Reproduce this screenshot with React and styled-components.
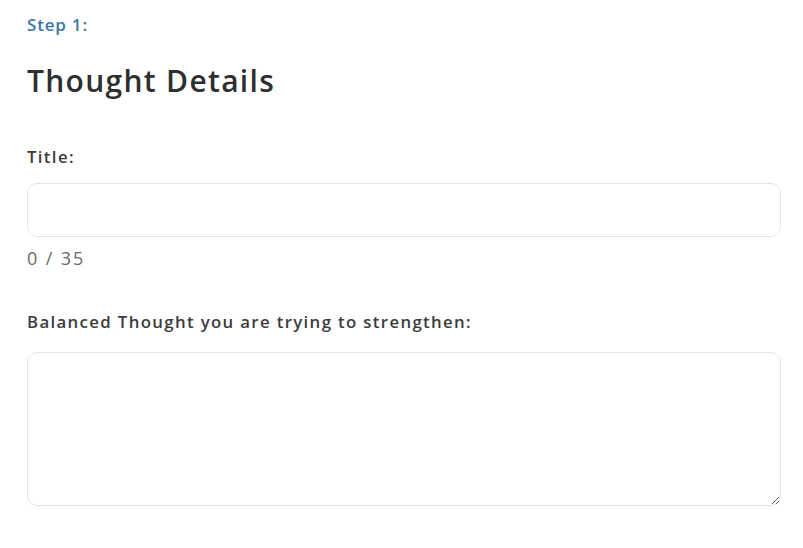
import React from "react";
import styled, { createGlobalStyle } from "styled-components";

const Global = createGlobalStyle`
  html, body { margin: 0; padding: 0; background: #ffffff; }
  body { font-family: "Open Sans", "Noto Sans", sans-serif; color: #333333; }
  * { box-sizing: border-box; }
`;

const Page = styled.div`
  padding: 14px 22px 0 27px;
  display: flex;
  flex-direction: column;
`;

const Step = styled.div`
  font-size: 17px;
  font-weight: 600;
  color: #3b77a6;
  line-height: 22px;
  letter-spacing: 0.8px;
`;

const Heading = styled.h1`
  margin: 26px 0 0 0;
  font-size: 30px;
  font-weight: 600;
  color: #2f2f2f;
  line-height: 38px;
  letter-spacing: 1.3px;
`;

const Field = styled.div`
  display: flex;
  flex-direction: column;
  margin-top: ${(p) => p.$top}px;
`;

const Label = styled.label`
  font-size: 16.8px;
  font-weight: 600;
  color: #3c3c3c;
  line-height: 22px;
  letter-spacing: 1.35px;
  margin-bottom: ${(p) => p.$gap}px;
`;

const Input = styled.input`
  width: 100%;
  height: 54px;
  border: 1px solid #e1e7e7;
  border-radius: 10px;
  outline: none;
  padding: 0 14px;
  font: inherit;
  font-size: 16px;
  background: #fff;
`;

const TextArea = styled.textarea`
  width: 100%;
  height: 154px;
  border: 1px solid #e1e7e7;
  border-radius: 10px;
  outline: none;
  padding: 12px 14px;
  font: inherit;
  font-size: 16px;
  background: #fff;
  resize: vertical;
  display: block;
`;

const Counter = styled.div`
  margin-top: 9px;
  font-size: 18px;
  color: #6a6a6a;
  line-height: 24px;
  letter-spacing: 1.9px;
`;

export default function App() {
  return (
    <>
      <Global />
      <Page>
        <Step>Step 1:</Step>
        <Heading>Thought Details</Heading>
        <Field $top={46}>
          <Label $gap={15}>Title:</Label>
          <Input type="text" />
          <Counter>0 / 35</Counter>
        </Field>
        <Field $top={41}>
          <Label $gap={19}>Balanced Thought you are trying to strengthen:</Label>
          <TextArea />
        </Field>
      </Page>
    </>
  );
}
